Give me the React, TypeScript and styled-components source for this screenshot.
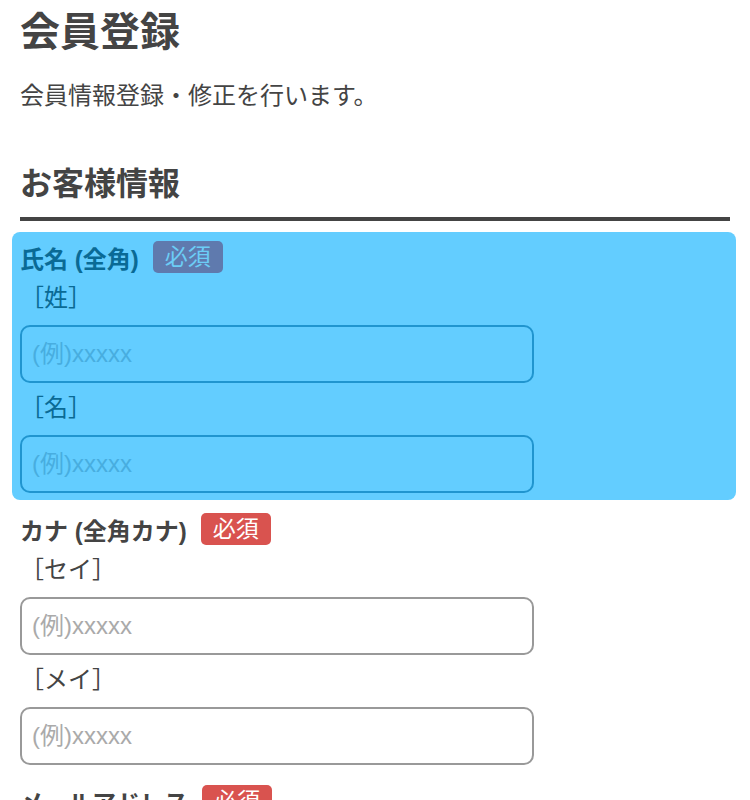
import React from "react";
import styled, { createGlobalStyle, css } from "styled-components";

const GlobalStyle = createGlobalStyle`
  body {
    margin: 0;
    background: #fff;
    font-family: "Liberation Sans", "Noto Sans CJK JP", sans-serif;
    color: #444;
  }
  * {
    box-sizing: border-box;
  }
`;

const Page = styled.div`
  width: 750px;
  padding: 2px 20px 0;
`;

const Title = styled.h1`
  margin: 0;
  font-size: 40px;
  line-height: 60px;
  font-weight: 700;
  color: #444;
`;

const Lead = styled.p`
  margin: 16px 0 0;
  font-size: 24px;
  line-height: 36px;
  color: #444;
`;

const SectionTitle = styled.h2`
  margin: 45px 0 0;
  font-size: 32px;
  line-height: 50px;
  font-weight: 700;
  color: #444;
  padding-bottom: 8px;
  border-bottom: 4px solid #444;
`;

const Form = styled.form`
  padding-top: 20px;
`;

const FieldGroup = styled.div<{ $highlighted?: boolean }>`
  margin-bottom: 20px;
  border-radius: 8px;

  ${({ $highlighted }) =>
    $highlighted &&
    css`
      margin: -9px -6px 13px -8px;
      padding: 9px 6px 7px 8px;
      background: #63cdff;
    `}
`;

const LabelRow = styled.div`
  display: flex;
  align-items: center;
  height: 32px;
`;

const Label = styled.span<{ $highlighted?: boolean }>`
  font-size: 24px;
  font-weight: 700;
  color: ${({ $highlighted }) => ($highlighted ? "#0a6a95" : "#444")};
`;

const Required = styled.span<{ $highlighted?: boolean }>`
  margin-left: 14px;
  height: 32px;
  padding: 0 12px;
  border-radius: 5px;
  font-size: 23px;
  line-height: 32px;
  background: ${({ $highlighted }) => ($highlighted ? "#5f7aae" : "#d9534f")};
  color: ${({ $highlighted }) => ($highlighted ? "#6ccdf6" : "#fff")};
`;

const SubLabel = styled.div<{ $highlighted?: boolean }>`
  padding: 7px 0 9px;
  font-size: 24px;
  line-height: 36px;
  color: ${({ $highlighted }) => ($highlighted ? "#0a6a95" : "#444")};
`;

const TextInput = styled.input<{ $highlighted?: boolean }>`
  display: block;
  width: 514px;
  height: 58px;
  padding: 0 10px;
  border: 2px solid ${({ $highlighted }) => ($highlighted ? "#2095cf" : "#999")};
  border-radius: 10px;
  background: transparent;
  font-family: "Liberation Sans", "Noto Sans CJK JP", sans-serif;
  font-size: 24px;
  color: #444;
  outline: none;

  &::placeholder {
    color: ${({ $highlighted }) => ($highlighted ? "#48ade0" : "#aaa")};
  }
`;

type Field = {
  label: string;
  parts: string[];
  highlighted?: boolean;
};

const fields: Field[] = [
  { label: "氏名 (全角)", parts: ["［姓］", "［名］"], highlighted: true },
  { label: "カナ (全角カナ)", parts: ["［セイ］", "［メイ］"] },
  { label: "メールアドレス", parts: [""] },
];

export default function App() {
  return (
    <>
      <GlobalStyle />
      <Page>
        <Title>会員登録</Title>
        <Lead>会員情報登録・修正を行います。</Lead>
        <SectionTitle>お客様情報</SectionTitle>
        <Form onSubmit={(e) => e.preventDefault()}>
          {fields.map((f) => (
            <FieldGroup key={f.label} $highlighted={f.highlighted}>
              <LabelRow>
                <Label $highlighted={f.highlighted}>{f.label}</Label>
                <Required $highlighted={f.highlighted}>必須</Required>
              </LabelRow>
              {f.parts.map((p, i) => (
                <React.Fragment key={i}>
                  <SubLabel $highlighted={f.highlighted}>{p}</SubLabel>
                  <TextInput
                    $highlighted={f.highlighted}
                    placeholder="(例)xxxxx"
                  />
                </React.Fragment>
              ))}
            </FieldGroup>
          ))}
        </Form>
      </Page>
    </>
  );
}
